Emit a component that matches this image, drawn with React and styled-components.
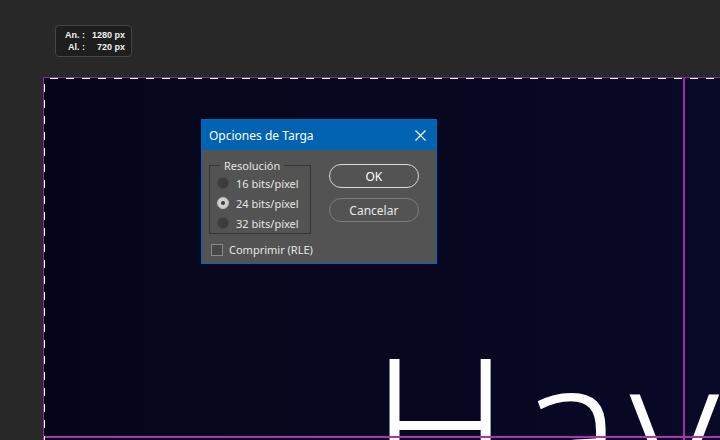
import React from "react";
import styled, { createGlobalStyle } from "styled-components";

const Global = createGlobalStyle`
  html, body {
    margin: 0;
    padding: 0;
    background: #282828;
    overflow: hidden;
  }
  body {
    width: 720px;
    height: 440px;
    font-family: "Noto Sans", "Open Sans", sans-serif;
  }
`;

const Workspace = styled.div`
  width: 720px;
  height: 440px;
  overflow: hidden;
  display: flex;
  flex-direction: column;
`;

const TopArea = styled.div`
  flex-shrink: 0;
  height: 77px;
  padding: 25px 0 0 55px;
  box-sizing: border-box;
`;

const SizeBadge = styled.div`
  display: grid;
  width: fit-content;
  grid-template-columns: 23px 33px;
  column-gap: 7px;
  align-content: center;
  padding: 0 6px 0 6px;
  height: 32px;
  box-sizing: border-box;
  background: #1e1e1e;
  border: 1px solid #464646;
  border-radius: 4px;
  font-family: "Liberation Sans", Arial, sans-serif;
  font-size: 9px;
  line-height: 12px;
  color: #f2f2f2;
  font-weight: bold;
  white-space: nowrap;
`;

const BadgeLabel = styled.span`
  text-align: right;
`;

const BadgeValue = styled.span`
  text-align: right;
`;

const Canvas = styled.div`
  flex-shrink: 0;
  position: relative;
  margin-left: 43px;
  width: 1000px;
  height: 500px;
  border-left: 1px solid #8a2d96;
  border-top: 1px solid #8a2d96;
  background: linear-gradient(90deg, #05051a 0%, #070720 40%, #09092a 75%, #0a0c30 100%);
  overflow: hidden;
`;

const AntsH = styled.div`
  position: absolute;
  left: 0;
  top: 0;
  width: 100%;
  height: 1px;
  background-image: linear-gradient(90deg, #ffffff 50%, transparent 50%);
  background-size: 16px 1px;
  background-position: 6px 0;
`;

const AntsV = styled.div`
  position: absolute;
  left: 0;
  top: 0;
  width: 1px;
  height: 100%;
  background-image: linear-gradient(180deg, #ffffff 50%, transparent 50%);
  background-size: 1px 16px;
  background-position: 0 6px;
`;

const GuideV = styled.div`
  position: absolute;
  left: 639px;
  top: 0;
  width: 2px;
  height: 100%;
  background: #9a30a6;
`;

const GuideH = styled.div`
  position: absolute;
  left: 0;
  top: 358px;
  width: 100%;
  height: 2px;
  background: #a836b4;
`;

const BigText = styled.div`
  position: absolute;
  left: 326px;
  top: 248px;
  font-family: "Open Sans", sans-serif;
  font-weight: 300;
  font-size: 195px;
  line-height: 1;
  letter-spacing: 8px;
  color: #ffffff;
  white-space: nowrap;
`;

const Dialog = styled.div`
  position: absolute;
  left: 157px;
  top: 41px;
  width: 236px;
  height: 145px;
  box-sizing: border-box;
  border: 1px solid #0866b6;
  background: #535353;
  display: flex;
  flex-direction: column;
`;

const TitleBar = styled.div`
  height: 30px;
  background: #0063b1;
  display: flex;
  align-items: center;
  justify-content: space-between;
  padding: 0 10px 0 7px;
  color: #ffffff;
  font-size: 12px;
`;

const CloseIcon = () => (
  <svg width="11" height="11" viewBox="0 0 11 11">
    <path d="M0.5 0.5 L10.5 10.5 M10.5 0.5 L0.5 10.5" stroke="#ffffff" strokeWidth="1.2" fill="none" />
  </svg>
);

const Body = styled.div`
  flex: 1;
  display: flex;
  padding: 8px 0 0 7px;
`;

const LeftCol = styled.div`
  display: flex;
  flex-direction: column;
`;

const Group = styled.fieldset`
  margin: 0;
  width: 102px;
  height: 76px;
  box-sizing: border-box;
  padding: 0 0 0 7px;
  border: 1px solid #363636;
  display: flex;
  flex-direction: column;
`;

const Legend = styled.legend`
  margin-left: 3px;
  padding: 0 4px;
  font-size: 11px;
  line-height: 15px;
  color: #e4e4e4;
`;

const RadioRow = styled.label`
  display: flex;
  align-items: center;
  height: 20px;
  gap: 7px;
  font-size: 11px;
  color: #e6e6e6;
`;

const RadioDot = styled.span`
  width: 12px;
  height: 12px;
  box-sizing: border-box;
  border-radius: 50%;
  background: ${({ checked }) => (checked ? "#cfcfcf" : "#3c3c3c")};
  border: 1px solid ${({ checked }) => (checked ? "#bdbdbd" : "#464646")};
  display: flex;
  align-items: center;
  justify-content: center;
  &::after {
    content: "";
    width: 4px;
    height: 4px;
    border-radius: 50%;
    background: #3a3a3a;
    display: ${({ checked }) => (checked ? "block" : "none")};
  }
`;

const CheckRow = styled.label`
  display: flex;
  align-items: center;
  gap: 6px;
  margin: 8px 0 0 2px;
  font-size: 11px;
  color: #e6e6e6;
`;

const CheckBox = styled.span`
  width: 12px;
  height: 12px;
  box-sizing: border-box;
  border: 1px solid #8a8a8a;
  background: #474747;
`;

const RightCol = styled.div`
  margin-left: 16px;
  padding-top: 6px;
  display: flex;
  flex-direction: column;
  gap: 10px;
`;

const Button = styled.button`
  width: 90px;
  height: 24px;
  border-radius: 12px;
  background: transparent;
  border: 1px solid ${({ primary }) => (primary ? "#d8d8d8" : "#7c7c7c")};
  color: ${({ primary }) => (primary ? "#ffffff" : "#e8e8e8")};
  font-family: "Noto Sans", "Open Sans", sans-serif;
  font-size: 12px;
  padding: 0;
`;

const resolutions = [
  { label: "16 bits/píxel", checked: false },
  { label: "24 bits/píxel", checked: true },
  { label: "32 bits/píxel", checked: false },
];

export default function App() {
  return (
    <>
      <Global />
      <Workspace>
        <TopArea>
          <SizeBadge>
            <BadgeLabel>An. :</BadgeLabel>
            <BadgeValue>1280 px</BadgeValue>
            <BadgeLabel>Al. :</BadgeLabel>
            <BadgeValue>720 px</BadgeValue>
          </SizeBadge>
        </TopArea>
        <Canvas>
          <BigText>Hay</BigText>
          <GuideV />
          <GuideH />
          <AntsH />
          <AntsV />
          <Dialog>
            <TitleBar>
              <span>Opciones de Targa</span>
              <CloseIcon />
            </TitleBar>
            <Body>
              <LeftCol>
                <Group>
                  <Legend>Resolución</Legend>
                  {resolutions.map((r) => (
                    <RadioRow key={r.label}>
                      <RadioDot checked={r.checked} />
                      {r.label}
                    </RadioRow>
                  ))}
                </Group>
                <CheckRow>
                  <CheckBox />
                  Comprimir (RLE)
                </CheckRow>
              </LeftCol>
              <RightCol>
                <Button primary>OK</Button>
                <Button>Cancelar</Button>
              </RightCol>
            </Body>
          </Dialog>
        </Canvas>
      </Workspace>
    </>
  );
}
